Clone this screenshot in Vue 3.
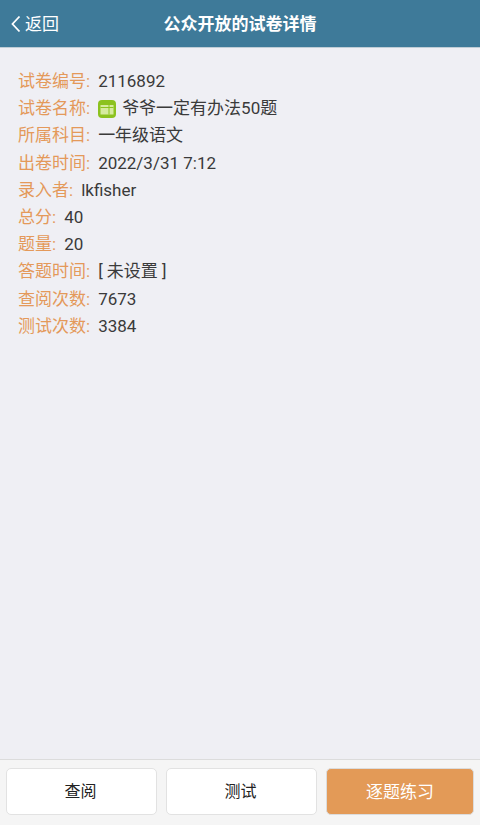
<script setup>
const rows = [
  { label: '试卷编号', value: '2116892' },
  { label: '试卷名称', value: '爷爷一定有办法50题', icon: true },
  { label: '所属科目', value: '一年级语文' },
  { label: '出卷时间', value: '2022/3/31 7:12' },
  { label: '录入者', value: 'lkfisher' },
  { label: '总分', value: '40' },
  { label: '题量', value: '20' },
  { label: '答题时间', value: '[ 未设置 ]' },
  { label: '查阅次数', value: '7673' },
  { label: '测试次数', value: '3384' },
]
</script>

<template>
  <div class="page">
    <header class="header">
      <a class="back">
        <svg class="back-icon" width="12" height="20" viewBox="0 0 12 20">
          <path d="M10.5 2.5 L3.5 10 L10.5 17.5" fill="none" stroke="#fff" stroke-width="1.8" />
        </svg>
        <span>返回</span>
      </a>
      <h1>公众开放的试卷详情</h1>
    </header>

    <main class="info">
      <div v-for="row in rows" :key="row.label" class="row">
        <span class="label">{{ row.label }}:</span>
        <svg v-if="row.icon" class="paper-icon" width="18" height="18" viewBox="0 0 18 18">
          <rect width="18" height="18" rx="4" fill="#8cc21f" />
          <rect x="2.5" y="5" width="13" height="9.5" fill="#d6eb9f" />
          <path d="M2.5 7.5 H15.5 M11 3.5 V14.5" stroke="#8cc21f" stroke-width="1" />
        </svg>
        <span class="value">{{ row.value }}</span>
      </div>
    </main>

    <footer class="footer">
      <button class="btn">查阅</button>
      <button class="btn">测试</button>
      <button class="btn primary">逐题练习</button>
    </footer>
  </div>
</template>

<style scoped>
.page {
  width: 480px;
  height: 825px;
  display: flex;
  flex-direction: column;
  background: #efeff4;
  font-family: "Roboto", "Noto Sans CJK SC", sans-serif;
  overflow: hidden;
}

.header {
  position: relative;
  height: 47px;
  flex: none;
  display: flex;
  align-items: center;
  justify-content: center;
  background: #3e7a99;
  border-bottom: 1px solid #bfcdd6;
  color: #fff;
}

.header h1 {
  margin: 0 0 3px;
  font-size: 17px;
  font-weight: 700;
}

.back {
  position: absolute;
  left: 9px;
  top: 14px;
  display: flex;
  align-items: center;
  gap: 4px;
  font-size: 17px;
  line-height: 20px;
}

.info {
  flex: 1;
  padding: 20px 18px 0;
}

.row {
  display: flex;
  align-items: baseline;
  height: 27.2px;
  font-size: 17px;
  line-height: 27px;
  color: #3a3a3a;
}

.label {
  color: #e4995a;
  margin-right: 8px;
}

.paper-icon {
  align-self: center;
  margin-right: 6px;
}

.footer {
  flex: none;
  height: 66px;
  box-sizing: border-box;
  display: grid;
  grid-template-columns: 151px 151px 148px;
  gap: 9px;
  padding: 8px 6px 0;
  background: #f5f5f5;
  border-top: 1px solid #dcdcdc;
}

.btn {
  height: 47px;
  padding: 0 2px 3px 0;
  background: #fff;
  border: 1px solid #e2e2e2;
  border-radius: 5px;
  font-family: inherit;
  font-size: 16px;
  color: #222;
}

.btn.primary {
  padding-right: 0;
  background: #e39a57;
  border-color: #dcdcdc;
  font-size: 17px;
  color: #fff;
}
</style>
